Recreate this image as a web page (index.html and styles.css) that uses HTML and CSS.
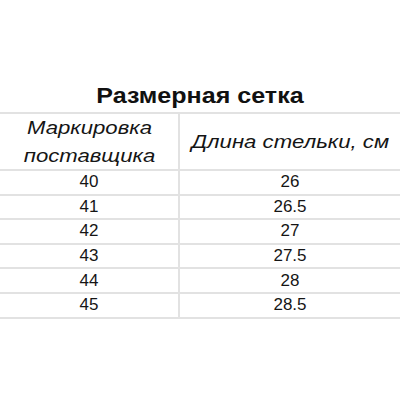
FILE: index.html
```html
<!DOCTYPE html>
<html lang="ru">
<head>
<meta charset="utf-8">
<link rel="stylesheet" href="styles.css">
</head>
<body>
<div class="page">
  <h1 class="title"><span class="wide">Размерная сетка</span></h1>
  <div class="sheet">
    <div class="cell head left"><span class="head-text">Маркировка<br>поставщика</span></div>
    <div class="cell head right"><span class="head-text">Длина стельки, см</span></div>
    <div class="cell left">40</div><div class="cell right">26</div>
    <div class="cell left">41</div><div class="cell right">26.5</div>
    <div class="cell left">42</div><div class="cell right">27</div>
    <div class="cell left">43</div><div class="cell right">27.5</div>
    <div class="cell left">44</div><div class="cell right">28</div>
    <div class="cell left">45</div><div class="cell right">28.5</div>
  </div>
</div>
</body>
</html>
```
FILE: styles.css
```css
html, body {
  margin: 0;
  padding: 0;
  background: #fff;
}
.page {
  width: 400px;
  height: 400px;
  font-family: "Liberation Sans", Arial, sans-serif;
  color: #151515;
  padding-top: 83px;
  box-sizing: border-box;
}
.title {
  margin: 0 0 3px;
  font-size: 22px;
  line-height: 26px;
  font-weight: bold;
  text-align: center;
  color: #111;
}
.wide {
  display: inline-block;
  transform: scaleX(1.14);
}
.sheet {
  display: grid;
  grid-template-columns: 180px 220px;
  grid-template-rows: 57px repeat(6, 24.6px);
  border-top: 2px solid #e2e2e2;
}
.cell {
  border-bottom: 2px solid #e2e2e2;
  display: flex;
  align-items: center;
  justify-content: center;
  font-size: 17px;
  box-sizing: border-box;
}
.left {
  border-right: 2px solid #e2e2e2;
}
.head {
  font-style: italic;
  font-size: 18px;
  line-height: 28px;
  text-align: center;
}
.head-text {
  display: inline-block;
  transform: scaleX(1.23);
}
```
